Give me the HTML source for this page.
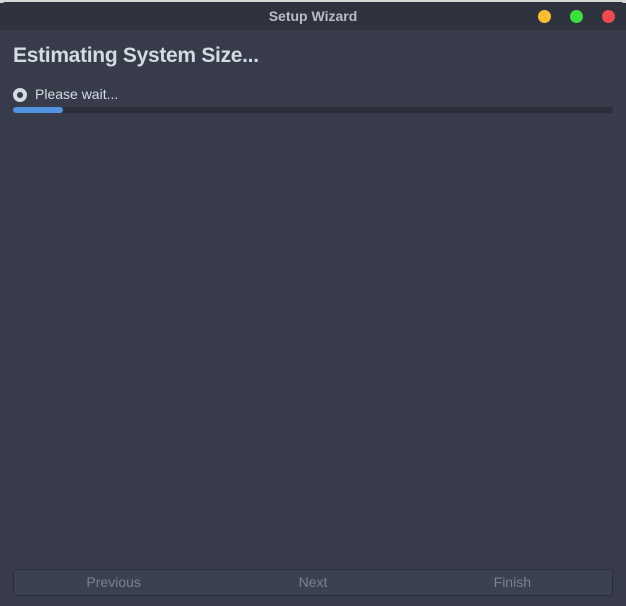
<!DOCTYPE html>
<html><head><style>
html,body{margin:0;padding:0;width:626px;height:606px;overflow:hidden;background:#2b2e39;font-family:"Liberation Sans",sans-serif;}
.top{position:absolute;left:0;top:0;width:626px;height:3px;background:#d8d8d8;}
.win{position:absolute;left:0;top:2px;width:626px;height:604px;background:#383c4a;border-radius:6px 6px 0 0;overflow:hidden;}
.tb{height:28px;background:#2f333f;position:relative;}
.tb .t{position:absolute;left:0;right:0;top:6px;text-align:center;color:#b7bcc7;font-weight:bold;font-size:14px;}
.dot{position:absolute;top:8px;width:13px;height:13px;border-radius:50%;}
h1{position:absolute;left:13px;top:42px;margin:0;font-size:21px;color:#d3dae3;font-weight:bold;letter-spacing:-0.3px;}
.rad{position:absolute;left:13px;top:86px;width:14px;height:14px;border-radius:50%;background:#d3dae3;}
.rad:after{content:"";position:absolute;left:4px;top:4px;width:6px;height:6px;border-radius:50%;background:#383c4a;}
.lbl{position:absolute;left:35px;top:84px;color:#d3dae3;font-size:14px;}
.bar{position:absolute;left:13px;top:105px;width:600px;height:6px;border-radius:3px;background:#2b2e39;}
.bar i{position:absolute;left:0;top:0;width:50px;height:6px;border-radius:3px;background:#5294e2;}
.btns{position:absolute;left:13px;top:567px;width:598px;height:25px;border:1px solid #2b2e39;border-radius:3px;background:#3c4150;display:flex;}
.btns div{flex:1;text-align:center;color:#7c818c;font-size:14px;line-height:25px;}
</style></head><body>
<div class="top"></div>
<div class="win">
<div class="tb"><div class="t">Setup Wizard</div>
<div class="dot" style="left:538px;background:#fdbd2e"></div>
<div class="dot" style="left:570px;background:#3ae03c"></div>
<div class="dot" style="left:602px;background:#f04a50"></div>
</div>
<h1>Estimating System Size...</h1>
<div class="rad"></div><div class="lbl">Please wait...</div>
<div class="bar"><i></i></div>
<div class="btns"><div>Previous</div><div>Next</div><div>Finish</div></div>
</div>
</body></html>
